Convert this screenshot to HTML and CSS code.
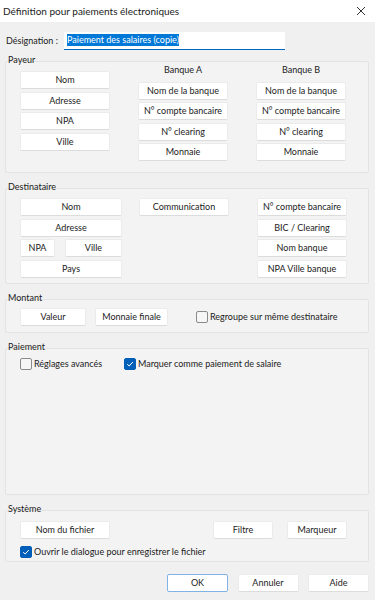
FILE: index.html
```html
<!DOCTYPE html>
<html lang="fr">
<head>
    <meta charset="UTF-8">
    <meta name="viewport" content="width=device-width, initial-scale=1.0">
    <title>Définition pour paiements électroniques</title>
    <link rel="stylesheet" href="styles.css">
</head>
<body>

    <!-- Title bar -->
    <div class="titlebar">
        <span>Définition pour paiements électroniques</span>
        <svg class="close" width="10" height="10" viewBox="0 0 10 10">
            <path d="M1 1 L9 9 M9 1 L1 9" stroke="#333" stroke-width="1" fill="none"/>
        </svg>
    </div>

    <div class="dialog">

        <div class="designation">
            <span class="designation-label">Désignation :</span>
            <div class="text-input"><span class="selected">Paiement des salaires (copie)</span></div>
        </div>

        <!-- Payeur -->
        <div class="group">
            <div class="group-title">Payeur</div>
            <div class="group-box payeur">
                <div class="col first">
                    <div class="btn">Nom</div>
                    <div class="btn">Adresse</div>
                    <div class="btn">NPA</div>
                    <div class="btn">Ville</div>
                </div>
                <div class="col">
                    <div class="col-head">Banque A</div>
                    <div class="btn">Nom de la banque</div>
                    <div class="btn">N° compte bancaire</div>
                    <div class="btn">N° clearing</div>
                    <div class="btn">Monnaie</div>
                </div>
                <div class="col">
                    <div class="col-head">Banque B</div>
                    <div class="btn">Nom de la banque</div>
                    <div class="btn">N° compte bancaire</div>
                    <div class="btn">N° clearing</div>
                    <div class="btn">Monnaie</div>
                </div>
            </div>
        </div>

        <!-- Destinataire -->
        <div class="group">
            <div class="group-title">Destinataire</div>
            <div class="group-box destinataire">
                <div class="col wide">
                    <div class="btn">Nom</div>
                    <div class="btn">Adresse</div>
                    <div class="split">
                        <div class="btn npa">NPA</div>
                        <div class="btn ville">Ville</div>
                    </div>
                    <div class="btn">Pays</div>
                </div>
                <div class="col comm">
                    <div class="btn">Communication</div>
                </div>
                <div class="col bank">
                    <div class="btn">N° compte bancaire</div>
                    <div class="btn">BIC / Clearing</div>
                    <div class="btn">Nom banque</div>
                    <div class="btn">NPA Ville banque</div>
                </div>
            </div>
        </div>

        <!-- Montant -->
        <div class="group">
            <div class="group-title">Montant</div>
            <div class="group-box montant">
                <div class="btn valeur">Valeur</div>
                <div class="btn monnaie">Monnaie finale</div>
                <label class="check regroupe"><span class="box"></span>Regroupe sur même destinataire</label>
            </div>
        </div>

        <!-- Paiement -->
        <div class="group">
            <div class="group-title">Paiement</div>
            <div class="group-box paiement">
                <label class="check reglages"><span class="box"></span>Réglages avancés</label>
                <label class="check"><span class="box checked"><svg width="8" height="8" viewBox="0 0 8 8"><path d="M1.2 4.2 L3.2 6 L6.8 2" stroke="#fff" stroke-width="1" fill="none"/></svg></span>Marquer comme paiement de salaire</label>
            </div>
        </div>

        <!-- Systeme -->
        <div class="group">
            <div class="group-title">Système</div>
            <div class="group-box systeme">
                <div class="systeme-row">
                    <div class="btn fichier">Nom du fichier</div>
                    <div class="btn small filtre">Filtre</div>
                    <div class="btn small">Marqueur</div>
                </div>
                <label class="check"><span class="box checked"><svg width="8" height="8" viewBox="0 0 8 8"><path d="M1.2 4.2 L3.2 6 L6.8 2" stroke="#fff" stroke-width="1" fill="none"/></svg></span>Ouvrir le dialogue pour enregistrer le fichier</label>
            </div>
        </div>

        <div class="actions">
            <div class="btn default">OK</div>
            <div class="btn">Annuler</div>
            <div class="btn">Aide</div>
        </div>

    </div>

</body>
</html>
```

FILE: styles.css
```css
* {
    margin: 0;
    padding: 0;
    box-sizing: border-box;
    font-family: "Segoe UI", Lato, sans-serif;
}

body {
    background: #f0f0f0;
    color: #1b1b1b;
    font-size: 9px;
    line-height: 12px;
    width: 375px;
    height: 600px;
    overflow: hidden;
}

/* Title bar */
.titlebar {
    background: #ffffff;
    height: 22px;
    display: flex;
    align-items: center;
    justify-content: space-between;
    padding: 0 9px 0 3px;
    font-size: 10px;
}

.close {
    display: block;
}

.dialog {
    padding: 0 6px 0 5px;
}

/* Designation */
.designation {
    display: flex;
    align-items: center;
    height: 18px;
    margin-top: 10px;
    white-space: nowrap;
}

.designation-label {
    width: 59px;
    padding-left: 1px;
}

.text-input {
    width: 221px;
    height: 18px;
    background: #ffffff;
    border-bottom: 1px solid #0067c0;
    padding: 2px 0 0 3px;
}

.selected {
    background: #0078d7;
    color: #ffffff;
    line-height: 12px;
    display: inline-block;
}

/* Groups */
.group {
    margin-top: 3px;
}

.group + .group {
    margin-top: 7px;
}

.group-title {
    line-height: 14px;
    padding-left: 3px;
    margin-bottom: -6px;
}

.group-box {
    border: 1px solid #e3e3e3;
    border-radius: 2px;
    background: #f3f3f3;
}

.btn {
    height: 18px;
    background: #ffffff;
    border: 1px solid #ebebeb;
    border-bottom-color: #dcdcdc;
    border-radius: 2px;
    display: flex;
    align-items: center;
    justify-content: center;
    white-space: nowrap;
}

.col {
    display: flex;
    flex-direction: column;
    gap: 2.5px;
}

.col-head {
    height: 17px;
    text-align: center;
    line-height: 16px;
}

/* Payeur */
.payeur {
    display: grid;
    grid-template-columns: 90px 90px 90px;
    column-gap: 28px;
    padding: 0 0 11px 14px;
}

.payeur .first {
    margin-top: 9px;
}

/* Destinataire */
.destinataire {
    display: flex;
    align-items: flex-start;
    padding: 9px 0 5px 14px;
}

.destinataire .wide {
    width: 102px;
}

.destinataire .comm {
    width: 90px;
    margin-left: 17px;
}

.destinataire .bank {
    width: 90px;
    margin-left: 28px;
}

.split {
    display: flex;
    justify-content: space-between;
}

.npa {
    width: 35px;
}

.ville {
    width: 57px;
}

/* Checkboxes */
.check {
    display: flex;
    align-items: center;
    white-space: nowrap;
}

.box {
    width: 12px;
    height: 12px;
    border: 1px solid #8a8a8a;
    border-radius: 2px;
    background: #f6f6f6;
    margin-right: 2px;
    display: flex;
    align-items: center;
    justify-content: center;
}

.box.checked {
    background: #005fb8;
    border-color: #005fb8;
}

/* Montant */
.montant {
    display: flex;
    align-items: center;
    padding: 8px 0 6px 14px;
}

.valeur {
    width: 66px;
}

.monnaie {
    width: 73px;
    margin-left: 9px;
}

.regroupe {
    margin-left: 28px;
}

/* Paiement */
.paiement {
    display: flex;
    align-items: flex-start;
    height: 147px;
    padding: 9px 0 0 14px;
}

.reglages {
    width: 104px;
}

/* Systeme */
.systeme {
    padding: 10px 21px 3px 14px;
}

.systeme-row {
    display: flex;
    gap: 14px;
    margin-bottom: 7px;
}

.fichier {
    width: 90px;
}

.small {
    width: 60px;
}

.filtre {
    margin-left: auto;
}

/* Bottom buttons */
.actions {
    display: flex;
    justify-content: flex-end;
    gap: 9.5px;
    margin-top: 12px;
}

.actions .btn {
    width: 61px;
}

.actions .default {
    border-color: #7fb3e6;
}
```
